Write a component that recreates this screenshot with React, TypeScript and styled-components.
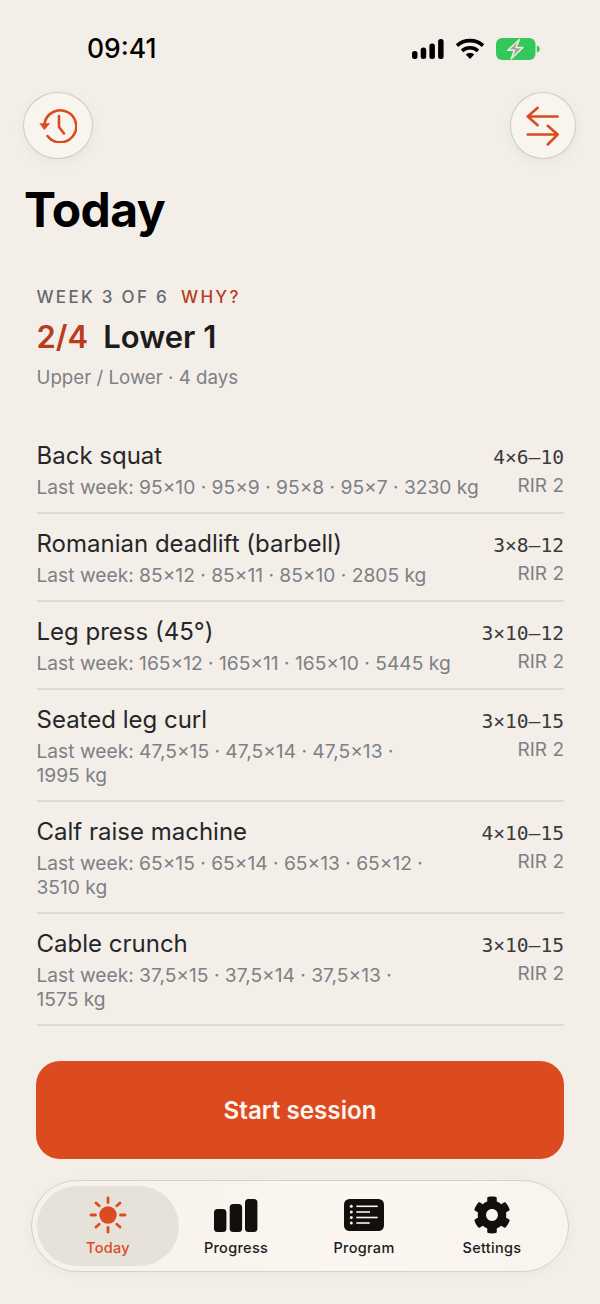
import React from 'react';
import styled, { createGlobalStyle } from 'styled-components';
import { FaCog } from 'react-icons/fa';

const ORANGE = '#dc4a1f';

const GlobalStyle = createGlobalStyle`
  html, body {
    margin: 0;
    padding: 0;
    background: #f3efe8;
  }
  * {
    box-sizing: border-box;
  }
  body {
    font-family: Inter, "Liberation Sans", sans-serif;
  }
`;

interface Exercise {
  name: string
  last: React.ReactNode
  sets: string
  rir: string
}

const exercises: Exercise[] = [
  { name: 'Back squat', last: 'Last week: 95×10 · 95×9 · 95×8 · 95×7 · 3230 kg', sets: '4×6–10', rir: 'RIR 2' },
  { name: 'Romanian deadlift (barbell)', last: 'Last week: 85×12 · 85×11 · 85×10 · 2805 kg', sets: '3×8–12', rir: 'RIR 2' },
  { name: 'Leg press (45°)', last: 'Last week: 165×12 · 165×11 · 165×10 · 5445 kg', sets: '3×10–12', rir: 'RIR 2' },
  { name: 'Seated leg curl', last: <>Last week: 47,5×15 · 47,5×14 · 47,5×13 ·<br />1995 kg</>, sets: '3×10–15', rir: 'RIR 2' },
  { name: 'Calf raise machine', last: <>Last week: 65×15 · 65×14 · 65×13 · 65×12 ·<br />3510 kg</>, sets: '4×10–15', rir: 'RIR 2' },
  { name: 'Cable crunch', last: <>Last week: 37,5×15 · 37,5×14 · 37,5×13 ·<br />1575 kg</>, sets: '3×10–15', rir: 'RIR 2' },
];

const SunIcon = () => (
  <svg width="38" height="38" viewBox="0 0 38 38" fill={ORANGE} stroke={ORANGE} strokeWidth="2.8" strokeLinecap="round">
    <circle cx="19" cy="19" r="8.7" stroke="none" />
    <path d="M19 2v4.5M19 31.5V36M2 19h4.5M31.5 19H36M7 7l3.2 2.8M27.8 28.2L31 31M31 7l-3.2 2.8M10.2 28.2L7 31" />
  </svg>
);

const BarsIcon = () => (
  <svg width="44" height="33" viewBox="0 0 44 33" fill="#12100c">
    <rect x="0" y="10" width="12.4" height="23" rx="3.5" />
    <rect x="15.7" y="5" width="12.4" height="28" rx="3.5" />
    <rect x="31" y="0" width="12.4" height="33" rx="3.5" />
  </svg>
);

const ListIcon = () => (
  <svg width="40" height="32" viewBox="0 0 40 32">
    <rect width="40" height="32" rx="5.5" fill="#12100c" />
    <g fill="#f7f3ec">
      <circle cx="7.3" cy="7.3" r="1.5" />
      <circle cx="7.3" cy="13" r="1.5" />
      <circle cx="7.3" cy="18.5" r="1.5" />
      <circle cx="7.3" cy="24" r="1.5" />
      <rect x="12.3" y="6.5" width="21.4" height="1.6" />
      <rect x="12.3" y="12.2" width="13.7" height="1.6" />
      <rect x="12.3" y="17.7" width="21.4" height="1.6" />
      <rect x="12.3" y="23.2" width="13.4" height="1.6" />
    </g>
  </svg>
);

const App = () => {
  return (
    <>
      <GlobalStyle />
      <Page>
        <StatusBar>
          <Clock>09:41</Clock>
          <StatusIcons>
            <svg width="32" height="20" viewBox="0 0 32 20" fill="#000">
              <rect x="0" y="12" width="5.5" height="8" rx="2.5" />
              <rect x="8.7" y="8.5" width="5.5" height="11.5" rx="2.5" />
              <rect x="17.4" y="4.5" width="5.5" height="15.5" rx="2.5" />
              <rect x="26.1" y="0" width="5.5" height="20" rx="2.5" />
            </svg>
            <svg width="30" height="22" viewBox="0 0 30 22" fill="none" stroke="#000" strokeWidth="3.6">
              <path d="M2 7.6C9.4 1 20.6 1 28 7.6" />
              <path d="M7 12.8c4.6-4 11.4-4 16 0" />
              <path d="M15 21l-4.2-4.6c2.4-1.8 6-1.8 8.4 0z" fill="#000" stroke="none" />
            </svg>
            <svg width="44" height="22" viewBox="0 0 44 22">
              <rect x="0" y="0" width="39.5" height="22" rx="6" fill="#34c759" />
              <path d="M40.8 7.5c2 .4 3 1.8 3 3.5s-1 3.1-3 3.5z" fill="#34c759" />
              <path d="M23.5 1.5L11.8 12.3h6.6l-3.2 8.5L27 9.5h-7z" fill="#a8a49d" stroke="#eef0e4" strokeWidth="1.5" strokeLinejoin="round" />
            </svg>
          </StatusIcons>
        </StatusBar>

        <NavRow>
          <RoundButton $width={70} aria-label="History">
            <svg width="38" height="35" viewBox="0 0 38 35" fill="none" stroke={ORANGE} strokeWidth="2.6" strokeLinecap="round" strokeLinejoin="round">
              <path d="M5.6 15A16 16 0 1 1 8.5 28" />
              <path d="M20 8v11l5 6.5" />
              <path d="M.3 15.3h11l-6 6.7z" fill={ORANGE} stroke="none" />
            </svg>
          </RoundButton>
          <RoundButton $width={66} aria-label="Switch">
            <svg width="34" height="40" viewBox="0 0 34 40" fill="none" stroke={ORANGE} strokeWidth="2.5" strokeLinecap="round" strokeLinejoin="round">
              <path d="M1.7 10.5h30M11.7 1.8l-10 8.7 10 8.7" />
              <path d="M1.7 28.5h30M21.7 19.8l10 8.7-10 10" />
            </svg>
          </RoundButton>
        </NavRow>

        <Title>Today</Title>

        <Summary>
          <WeekLine>
            WEEK 3 OF 6<Why>WHY?</Why>
          </WeekLine>
          <DayLine>
            <DayCount>2/4</DayCount>
            <span>Lower 1</span>
          </DayLine>
          <Split>Upper / Lower · 4 days</Split>
        </Summary>

        <List>
          {exercises.map((item) => (
            <Row key={item.name}>
              <RowMain>
                <Name>{item.name}</Name>
                <Last>{item.last}</Last>
              </RowMain>
              <RowSide>
                <Sets>{item.sets}</Sets>
                <Rir>{item.rir}</Rir>
              </RowSide>
            </Row>
          ))}
        </List>

        <StartButton>Start session</StartButton>

        <TabBar>
          <Tab $active>
            <TabIcon><SunIcon /></TabIcon>
            Today
          </Tab>
          <Tab>
            <TabIcon><BarsIcon /></TabIcon>
            Progress
          </Tab>
          <Tab>
            <TabIcon><ListIcon /></TabIcon>
            Program
          </Tab>
          <Tab>
            <TabIcon><FaCog size={38} color="#12100c" /></TabIcon>
            Settings
          </Tab>
        </TabBar>
      </Page>
    </>
  )
}

export default App;

const Page = styled.div`
  width: 600px;
  height: 1304px;
  overflow: hidden;
  background: #f3efe8;
  color: #1c1c1e;
`

const StatusBar = styled.div`
  height: 92px;
  padding: 30px 60px 0 87px;
  display: flex;
  justify-content: space-between;
  align-items: flex-start;
`

const Clock = styled.div`
  font-size: 26.5px;
  line-height: 36px;
  font-weight: 500;
  color: #000;
`

const StatusIcons = styled.div`
  display: flex;
  align-items: center;
  gap: 11px;
  height: 38px;
`

const NavRow = styled.div`
  display: flex;
  justify-content: space-between;
  padding: 0 24px 0 23px;
`

const RoundButton = styled.button<{ $width: number }>`
  width: ${({ $width }) => $width}px;
  height: 67px;
  padding: 0;
  display: flex;
  align-items: center;
  justify-content: center;
  border-radius: 50%;
  border: 1px solid #cfcac2;
  background: #f8f4ee;
  box-shadow: 0 4px 12px rgba(90, 70, 40, 0.06);
`

const Title = styled.h1`
  margin: 22px 0 0 24px;
  font-size: 48px;
  line-height: 58px;
  font-weight: 700;
  letter-spacing: -0.6px;
  color: #000;
`

const Summary = styled.div`
  padding: 48px 36px 0 36.5px;
`

const WeekLine = styled.div`
  font-size: 17px;
  line-height: 20px;
  font-weight: 500;
  letter-spacing: 2.3px;
  color: #666a72;
`

const Why = styled.span`
  margin-left: 12px;
  color: #b83c1e;
`

const DayLine = styled.div`
  display: flex;
  gap: 15px;
  margin-top: 11px;
  font-size: 31px;
  line-height: 38px;
  font-weight: 600;
  color: #1c1c1e;
`

const DayCount = styled.span`
  color: #b83c1e;
`

const Split = styled.div`
  margin-top: 10px;
  font-size: 18.7px;
  line-height: 24px;
  color: #7d8085;
`

const List = styled.div`
  margin-top: 36px;
  padding: 0 36px 0 36.5px;
`

const Row = styled.div`
  display: flex;
  justify-content: space-between;
  align-items: flex-start;
  padding: 14px 0 13px;
  border-bottom: 2px solid #dedad3;
`

const RowMain = styled.div`
  min-width: 0;
`

const Name = styled.div`
  font-size: 24px;
  line-height: 32px;
  color: #26262a;
`

const Last = styled.div`
  margin-top: 3px;
  font-size: 19.2px;
  line-height: 24px;
  color: #7d8085;
  white-space: nowrap;
`

const RowSide = styled.div`
  flex-shrink: 0;
  text-align: right;
`

const Sets = styled.div`
  margin-top: 6px;
  font-family: "DejaVu Sans Mono", "Liberation Mono", monospace;
  font-size: 19.6px;
  line-height: 24px;
  color: #3a3a3e;
`

const Rir = styled.div`
  margin-top: 4px;
  font-size: 19px;
  line-height: 24px;
  color: #7d8085;
`

const StartButton = styled.button`
  display: block;
  width: 528px;
  height: 98px;
  margin: 35px 0 0 36px;
  border: 0;
  border-radius: 24px;
  background: #dc4a1f;
  color: #fbf5ee;
  font-family: Inter, "Liberation Sans", sans-serif;
  font-size: 24.2px;
  font-weight: 600;
`

const TabBar = styled.div`
  width: 538px;
  height: 92px;
  margin: 21px 0 0 31px;
  padding: 5px 12px;
  display: grid;
  grid-template-columns: repeat(4, 128px);
  border-radius: 46px;
  border: 1px solid #d6d0c6;
  background: linear-gradient(90deg, #f6f1e9, #fbf6ef 60%, #f9f5ee);
  box-shadow: 0 2px 10px rgba(90, 70, 40, 0.05);
`

const Tab = styled.div<{ $active?: boolean }>`
  display: flex;
  flex-direction: column;
  align-items: center;
  justify-content: flex-start;
  padding-top: 8px;
  margin: ${({ $active }) => ($active ? '0 -7px' : '0')};
  border-radius: 40px;
  font-size: 14.5px;
  line-height: 20px;
  font-weight: 500;
  letter-spacing: 0.3px;
  color: ${({ $active }) => ($active ? ORANGE : '#1c1c1e')};
  background: ${({ $active }) => ($active ? '#e7e2d9' : 'transparent')};
`

const TabIcon = styled.div`
  height: 42px;
  margin-bottom: 2px;
  display: flex;
  align-items: center;
  justify-content: center;
`
